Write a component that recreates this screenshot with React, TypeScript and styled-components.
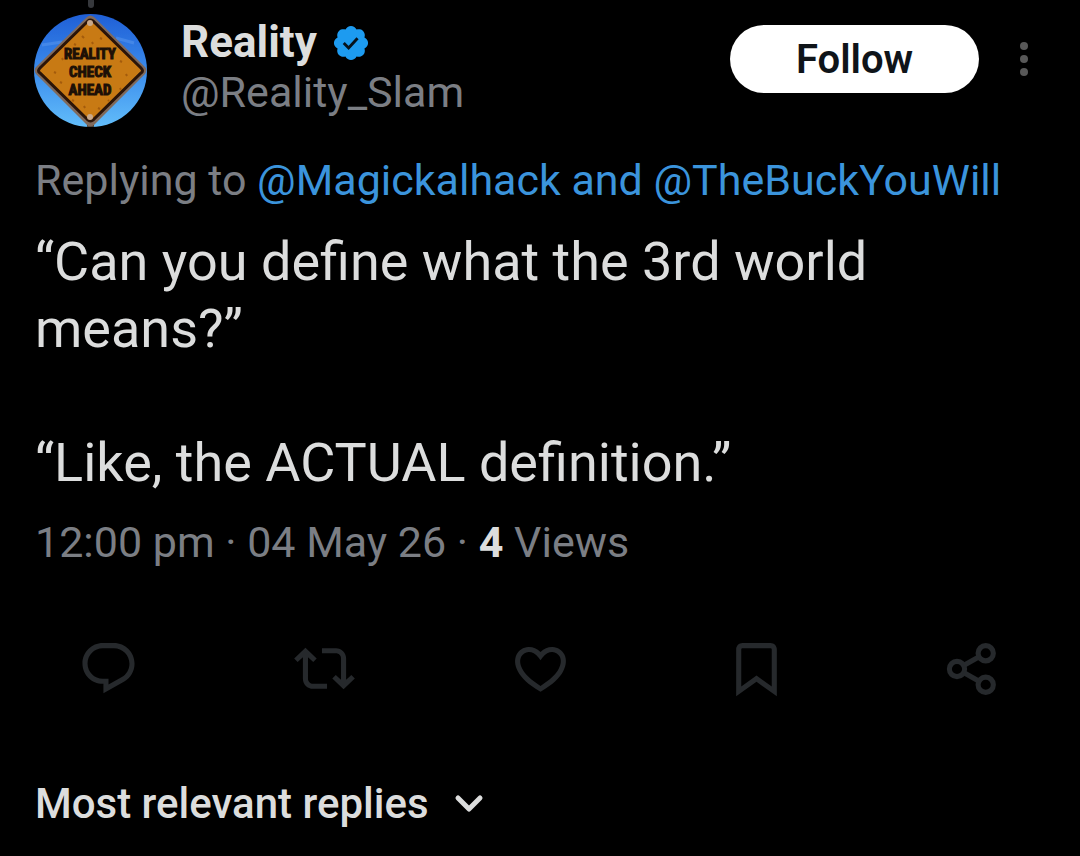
import React from "react";
import styled, { createGlobalStyle } from "styled-components";

const colors = {
  background: "#000000",
  text: "#dcdddd",
  muted: "#7b7e84",
  link: "#3b94dc",
  verified: "#1d9bf0",
  icon: "#26292c",
  thread: "#36383c",
};

const GlobalStyle = createGlobalStyle`
  * { box-sizing: border-box; }
  body {
    margin: 0;
    background: ${colors.background};
    color: ${colors.text};
    font-family: Roboto, "Noto Sans", sans-serif;
  }
  button {
    font-family: inherit;
    border: 0;
    padding: 0;
    background: none;
    color: inherit;
    cursor: pointer;
  }
  a { text-decoration: none; }
  svg { display: block; }
`;

const Page = styled.main`
  background: ${colors.background};
`;

const ThreadLine = styled.div`
  width: 6px;
  height: 8px;
  margin: 0 0 6px 88px;
  border-radius: 0 0 3px 3px;
  background: ${colors.thread};
`;

const Header = styled.header`
  display: flex;
  align-items: flex-start;
  padding: 0 40px 0 34px;
`;

const AvatarLink = styled.a`
  flex: none;
  width: 113px;
  height: 113px;
  border-radius: 50%;
  overflow: hidden;
`;

const Identity = styled.div`
  flex: 1;
  min-width: 0;
  margin-left: 34px;
`;

const NameRow = styled.div`
  display: flex;
  align-items: center;
  gap: 14px;
  height: 57px;
`;

const Name = styled.h1`
  margin: 0;
  font-size: 44px;
  line-height: 57px;
  font-weight: 700;
`;

const Handle = styled.a`
  display: block;
  font-size: 43px;
  line-height: 43px;
  color: ${colors.muted};
`;

const HeaderActions = styled.div`
  display: flex;
  align-items: center;
  gap: 29px;
  margin-top: 11px;
`;

const FollowButton = styled.button`
  width: 249px;
  height: 68px;
  padding-top: 2px;
  border-radius: 34px;
  background: #ffffff;
  color: #0f1419;
  font-size: 40px;
  line-height: 66px;
  font-weight: 600;
`;

const MoreButton = styled.button`
  width: 32px;
  height: 48px;
  display: grid;
  place-items: center;
`;

const Body = styled.article`
  padding: 0 35px;
`;

const ReplyingTo = styled.p`
  margin: 27px 0 0;
  font-size: 43px;
  line-height: 52px;
  color: ${colors.muted};
`;

const Mention = styled.a`
  color: ${colors.link};
`;

const TweetText = styled.p`
  margin: 22px 0 0;
  font-size: 54px;
  line-height: 67px;
  white-space: pre-line;
`;

const Meta = styled.p`
  margin: 20px 0 0;
  font-size: 43px;
  line-height: 52px;
  color: ${colors.muted};
`;

const ViewCount = styled.strong`
  color: ${colors.text};
  font-weight: 700;
`;

const ActionBar = styled.div`
  display: grid;
  grid-template-columns: repeat(5, 1fr);
  margin-top: 70px;
`;

const ActionButton = styled.button`
  display: grid;
  place-items: center;
  color: ${colors.icon};
`;

const SortButton = styled.button`
  display: flex;
  align-items: center;
  gap: 25px;
  margin: 80px 35px 26px;
  color: ${colors.text};
  font-size: 42px;
  line-height: 50px;
  font-weight: 500;
`;

const SignText = styled.text`
  font-family: "Liberation Sans Narrow", "Roboto Condensed", Roboto, sans-serif;
  font-size: 15px;
  font-weight: 700;
  text-anchor: middle;
  fill: #1d1006;
  stroke: #1d1006;
  stroke-width: 1;
`;

const Avatar = () => (
  <svg width="113" height="113" viewBox="0 0 113 113" role="img" aria-label="Reality">
    <defs>
      <linearGradient id="sky" x1="0" y1="0" x2="0" y2="1">
        <stop offset="0" stopColor="#1f5fd6" />
        <stop offset="0.5" stopColor="#3b8cec" />
        <stop offset="1" stopColor="#62bdfa" />
      </linearGradient>
    </defs>
    <rect width="113" height="113" fill="url(#sky)" />
    <path d="M8 31l20-3M82 24l18 5" stroke="#5b97ee" strokeWidth="3" opacity="0.5" />
    <path d="M53 106h7v7h-7z" fill="#4a3a2c" />
    <path d="M53 3q3-3 7 0l51 50q3 3 0 7l-51 51q-4 3-7 0L2 60q-3-4 0-7z" fill="#806a5c" />
    <path
      d="M54 7q2-2 5 0l48 47q3 3 0 5L59 106q-3 2-5 0L6 59q-3-2 0-5z"
      fill="#c87a14"
      stroke="#2a1408"
      strokeWidth="3"
    />
    <path
      d="M48 22l2 2M66 24l2 1M40 30l2 1M75 34l1 2M28 44l1 2M86 47l2 1M20 58l2 1M92 60l1 2M26 68l2 1M86 74l1 2M38 86l2 1M50 92l1 2M64 94l2 1M74 86l1 1M58 28l1 2"
      stroke="#a35b0c"
      strokeWidth="2"
    />
    <circle cx="56" cy="9" r="3" fill="#c9a98a" />
    <circle cx="56" cy="103" r="3" fill="#c9a98a" />
    <SignText x="56" y="45">REALITY</SignText>
    <SignText x="56" y="63">CHECK</SignText>
    <SignText x="56" y="81">AHEAD</SignText>
  </svg>
);

const VerifiedBadge = () => (
  <svg width="40" height="40" viewBox="0 0 22 22" role="img" aria-label="Verified account">
    <path
      fill={colors.verified}
      d="M20.396 11c-.018-.646-.215-1.275-.57-1.816-.354-.54-.852-.972-1.438-1.246.223-.607.27-1.264.14-1.897-.131-.634-.437-1.218-.882-1.687-.47-.445-1.053-.75-1.687-.882-.633-.13-1.29-.083-1.897.14-.273-.587-.704-1.086-1.245-1.44S11.647 1.62 11 1.604c-.646.017-1.273.213-1.813.568s-.969.854-1.24 1.44c-.608-.223-1.267-.272-1.902-.14-.635.13-1.22.436-1.69.882-.445.47-.749 1.055-.878 1.688-.13.633-.08 1.29.144 1.896-.587.274-1.087.705-1.443 1.245-.356.54-.555 1.17-.574 1.817.02.647.218 1.276.574 1.817.356.54.856.972 1.443 1.245-.224.606-.274 1.263-.144 1.896.13.634.433 1.218.877 1.688.47.443 1.054.747 1.687.878.633.132 1.29.084 1.897-.136.274.586.705 1.084 1.246 1.439.54.354 1.17.551 1.816.569.647-.016 1.276-.213 1.817-.567s.972-.854 1.245-1.44c.604.239 1.266.296 1.903.164.636-.132 1.22-.447 1.68-.907.46-.46.776-1.044.908-1.681s.075-1.299-.165-1.903c.586-.274 1.084-.705 1.439-1.246.354-.54.551-1.17.569-1.816z"
    />
    <path d="M7 11l2.7 2.7 4.9-5.3" fill="none" stroke="#06121c" strokeWidth="1.6" />
  </svg>
);

const MoreIcon = () => (
  <svg width="10" height="36" viewBox="0 0 10 36" fill="#585858" aria-hidden="true">
    <circle cx="5" cy="5" r="4" />
    <circle cx="5" cy="18" r="4" />
    <circle cx="5" cy="31" r="4" />
  </svg>
);

const actions = [
  {
    label: "Reply",
    path: "M1.751 10c0-4.42 3.584-8 8.005-8h4.366c4.49 0 8.129 3.64 8.129 8.13 0 2.96-1.607 5.68-4.196 7.11l-8.054 4.46v-3.69h-.067c-4.49.1-8.183-3.51-8.183-8.01zm8.005-6c-3.317 0-6.005 2.69-6.005 6 0 3.37 2.77 6.08 6.138 6.01l.351-.01h1.761v2.3l5.087-2.81c1.951-1.08 3.163-3.13 3.163-5.36 0-3.39-2.744-6.13-6.129-6.13H9.756z",
  },
  {
    label: "Repost",
    path: "M4.5 3.88l4.432 4.14-1.364 1.46L5.5 7.55V16c0 1.1.896 2 2 2H13v2H7.5c-2.209 0-4-1.79-4-4V7.55L1.432 9.48.068 8.02 4.5 3.88zM16.5 6H11V4h5.5c2.209 0 4 1.79 4 4v8.45l2.068-1.93 1.364 1.46-4.432 4.14-4.432-4.14 1.364-1.46 2.068 1.93V8c0-1.1-.896-2-2-2z",
  },
  {
    label: "Like",
    path: "M16.697 5.5c-1.222-.06-2.679.51-3.89 2.16l-.805 1.09-.806-1.09C9.984 6.01 8.526 5.44 7.304 5.5c-1.243.07-2.349.78-2.91 1.91-.552 1.12-.633 2.78.479 4.82 1.074 1.97 3.257 4.27 7.129 6.61 3.87-2.34 6.052-4.64 7.126-6.61 1.111-2.04 1.03-3.7.477-4.82-.561-1.13-1.666-1.84-2.908-1.91zm4.187 7.69c-1.351 2.48-4.001 5.12-8.379 7.67l-.503.3-.504-.3c-4.379-2.55-7.029-5.19-8.382-7.67-1.36-2.5-1.41-4.86-.514-6.67.887-1.79 2.647-2.91 4.601-3.01 1.651-.09 3.368.56 4.798 2.01 1.429-1.45 3.146-2.1 4.796-2.01 1.954.1 3.714 1.22 4.601 3.01.896 1.81.846 4.17-.514 6.67z",
  },
  {
    label: "Bookmark",
    path: "M4 4.5C4 3.12 5.119 2 6.5 2h11C18.881 2 20 3.12 20 4.5v18.44l-8-5.71-8 5.71V4.5zM6.5 4c-.276 0-.5.22-.5.5v14.56l6-4.29 6 4.29V4.5c0-.28-.224-.5-.5-.5h-11z",
  },
];

const ShareIcon = () => (
  <svg width="61" height="61" viewBox="0 0 24 24" fill="none" stroke="currentColor" strokeWidth="2" aria-hidden="true">
    <circle cx="17.2" cy="6" r="3" />
    <circle cx="5.9" cy="12.2" r="3" />
    <circle cx="17.2" cy="18.4" r="3" />
    <path d="M8.5 10.8l6.1-3.4M8.5 13.6l6.1 3.4" />
  </svg>
);

const ChevronIcon = () => (
  <svg width="30" height="20" viewBox="0 0 30 20" fill="none" stroke="currentColor" strokeWidth="5" strokeLinecap="round" strokeLinejoin="round" aria-hidden="true">
    <path d="M4 4l11 11L26 4" />
  </svg>
);

export default function App() {
  return (
    <Page>
      <GlobalStyle />
      <ThreadLine />
      <Header>
        <AvatarLink href="#profile">
          <Avatar />
        </AvatarLink>
        <Identity>
          <NameRow>
            <Name>Reality</Name>
            <VerifiedBadge />
          </NameRow>
          <Handle href="#profile">@Reality_Slam</Handle>
        </Identity>
        <HeaderActions>
          <FollowButton type="button">Follow</FollowButton>
          <MoreButton type="button" aria-label="More options">
            <MoreIcon />
          </MoreButton>
        </HeaderActions>
      </Header>
      <Body>
        <ReplyingTo>
          Replying to <Mention href="#replying">@Magickalhack and @TheBuckYouWill</Mention>
        </ReplyingTo>
        <TweetText>{"“Can you define what the 3rd world means?”\n\n“Like, the ACTUAL definition.”"}</TweetText>
        <Meta>
          12:00 pm · 04 May 26 · <ViewCount>4</ViewCount> Views
        </Meta>
      </Body>
      <ActionBar>
        {actions.map(({ label, path }) => (
          <ActionButton key={label} type="button" aria-label={label}>
            <svg width="61" height="61" viewBox="0 0 24 24" fill="currentColor" aria-hidden="true">
              <path d={path} />
            </svg>
          </ActionButton>
        ))}
        <ActionButton type="button" aria-label="Share">
          <ShareIcon />
        </ActionButton>
      </ActionBar>
      <SortButton type="button">
        Most relevant replies
        <ChevronIcon />
      </SortButton>
    </Page>
  );
}
